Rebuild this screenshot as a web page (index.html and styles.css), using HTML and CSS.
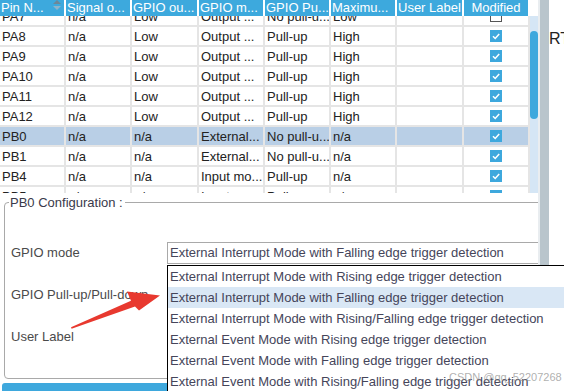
FILE: index.html
```html
<!DOCTYPE html>
<html lang="en">
<head>
    <meta charset="UTF-8">
    <title>Pin Configuration</title>
    <link rel="stylesheet" href="styles.css">
</head>
<body>
    <div class="window">
        <div class="left-pane">
            <div class="table-area">
                <div class="grid">
                    <div class="row head">
                        <div class="cell">Pin N...
                            <svg class="sort" width="8" height="12" viewBox="0 0 8 12"><polygon points="0,5 4,1 8,5" fill="#6d8797"/><polygon points="0,7 8,7 4,11" fill="#8fb4c9"/></svg>
                        </div>
                        <div class="cell">Signal o...</div>
                        <div class="cell">GPIO ou...</div>
                        <div class="cell">GPIO m...</div>
                        <div class="cell">GPIO Pu...</div>
                        <div class="cell">Maximu...</div>
                        <div class="cell">User Label</div>
                        <div class="cell center">Modified</div>
                    </div>
                    <div class="body">
                        <div class="rows" id="rows"></div>
                    </div>
                </div>
                <div class="vscroll"><div class="thumb"></div></div>
            </div>

            <div class="config">
                <fieldset class="box">
                    <legend>PB0 Configuration :</legend>
                    <div class="form">
                        <div class="label">GPIO mode</div>
                        <div class="select">External Interrupt Mode with Falling edge trigger detection</div>
                        <div class="label">GPIO Pull-up/Pull-down</div>
                        <div class="select">No pull-up and no pull-down</div>
                        <div class="label">User Label</div>
                        <div class="select"></div>
                    </div>
                </fieldset>
                <div class="hbar"></div>
            </div>
        </div>
        <div class="edge"></div>
        <div class="right-pane"><span>RT1</span></div>
    </div>

    <!-- open list of the GPIO mode combo -->
    <div class="dropdown">
        <div class="item">External Interrupt Mode with Rising edge trigger detection</div>
        <div class="item active">External Interrupt Mode with Falling edge trigger detection</div>
        <div class="item">External Interrupt Mode with Rising/Falling edge trigger detection</div>
        <div class="item">External Event Mode with Rising edge trigger detection</div>
        <div class="item">External Event Mode with Falling edge trigger detection</div>
        <div class="item">External Event Mode with Rising/Falling edge trigger detection</div>
    </div>

    <svg class="arrow" width="564" height="391" viewBox="0 0 564 391">
        <polygon points="71,327.3 131,300.8 127,291.5 160,295.5 139,310.5 135,306.5 71.6,328.7" fill="#e8392f"/>
    </svg>

    <div class="watermark">CSDN @qq_52207268</div>

    <script>
        // rows of the pin table (first one is scrolled half out of view)
        const pins = [
            ['PA7', 'n/a', 'Low', 'Output ...', 'No pull-u...', 'Low', '', false],
            ['PA8', 'n/a', 'Low', 'Output ...', 'Pull-up', 'High', '', true],
            ['PA9', 'n/a', 'Low', 'Output ...', 'Pull-up', 'High', '', true],
            ['PA10', 'n/a', 'Low', 'Output ...', 'Pull-up', 'High', '', true],
            ['PA11', 'n/a', 'Low', 'Output ...', 'Pull-up', 'High', '', true],
            ['PA12', 'n/a', 'Low', 'Output ...', 'Pull-up', 'High', '', true],
            ['PB0', 'n/a', 'n/a', 'External...', 'No pull-u...', 'n/a', '', true],
            ['PB1', 'n/a', 'n/a', 'External...', 'No pull-u...', 'n/a', '', true],
            ['PB4', 'n/a', 'n/a', 'Input mo...', 'Pull-up', 'n/a', '', true],
            ['PB5', 'n/a', 'n/a', 'Input mo...', 'Pull-up', 'n/a', '', true]
        ];

        const checked = '<svg width="12" height="12" viewBox="0 0 12 12"><rect width="12" height="12" fill="#3ea8dd"/><polyline points="3,6.3 5.2,8.5 9.2,4" fill="none" stroke="#fff" stroke-width="1.5"/></svg>';
        const unchecked = '<svg width="12" height="12" viewBox="0 0 12 12"><rect x="0.5" y="0.5" width="11" height="11" fill="#fff" stroke="#555"/></svg>';

        const rowsEl = document.getElementById('rows');
        pins.forEach(pin => {
            const row = document.createElement('div');
            row.className = 'row';
            if (pin[0] === 'PB0') row.classList.add('selected');
            for (let i = 0; i < 7; i++) {
                const cell = document.createElement('div');
                cell.className = 'cell';
                cell.textContent = pin[i];
                row.appendChild(cell);
            }
            const mod = document.createElement('div');
            mod.className = 'cell center';
            mod.innerHTML = pin[7] ? checked : unchecked;
            row.appendChild(mod);
            rowsEl.appendChild(row);
        });
    </script>
</body>
</html>
```

FILE: styles.css
```css
body {
    margin: 0;
    font-family: "Liberation Sans", Arial, sans-serif;
    font-size: 13px;
    color: #222;
    background: #fff;
    overflow: hidden;
}

.window {
    display: flex;
    width: 564px;
    height: 391px;
}

.left-pane {
    width: 538px;
    display: flex;
    flex-direction: column;
    overflow: hidden;
}

/* pin table */
.table-area {
    display: flex;
    height: 193px;
}

.grid {
    width: 530px;
    overflow: hidden;
}

.row {
    display: grid;
    grid-template-columns: 66px 66px 67px 66px 66px 66px 67px 66px;
    height: 20px;
}

.row .cell {
    box-sizing: border-box;
    border-right: 2px solid #e5e5e5;
    border-bottom: 2px solid #e5e5e5;
    padding-left: 2px;
    line-height: 19px;
    white-space: nowrap;
    overflow: hidden;
}

.row .center {
    display: flex;
    justify-content: center;
    align-items: center;
    padding: 0 0 1px;
}

.head {
    height: 16px;
}

.head .cell {
    position: relative;
    background: #3da9dd;
    color: #fff;
    border-right: 2px solid #fff;
    border-bottom: none;
    line-height: 16px;
    font-size: 13px;
    padding-left: 1px;
}

.head .center {
    display: block;
    text-align: center;
    padding: 0;
}

.sort {
    position: absolute;
    left: 53px;
    top: -1px;
}

.body {
    height: 177px;
    overflow: hidden;
}

.rows {
    margin-top: -9px;
}

.selected {
    background: #b9cfe6;
}

.vscroll {
    width: 8px;
    margin-top: 16px;
    background: #d5e6f5;
    position: relative;
}

.thumb {
    position: absolute;
    left: 0;
    top: 15px;
    width: 8px;
    height: 88px;
    border-radius: 4px;
    background: #3ea8dd;
}

/* configuration group */
.config {
    flex: 1;
    display: flex;
    flex-direction: column;
}

.box {
    margin: 2px 0 0 4px;
    width: 540px;
    height: 184px;
    box-sizing: border-box;
    border: 1px solid #a9a9a9;
    border-radius: 4px;
    padding: 0 0 0 6px;
}

.box legend {
    margin-left: -2px;
    padding: 0 2px 0 1px;
    color: #3a3a4a;
    line-height: 15px;
}

.form {
    display: grid;
    grid-template-columns: 156px 372px;
    grid-auto-rows: 22px;
    row-gap: 20px;
    margin-top: 32px;
    color: #4a4a4a;
}

.label {
    line-height: 22px;
}

.select {
    box-sizing: border-box;
    border: 1px solid #a9a9a9;
    border-right: none;
    padding-left: 2px;
    line-height: 20px;
    color: #45455a;
    white-space: nowrap;
    overflow: hidden;
}

.hbar {
    margin: 4px 0 0 2px;
    height: 9px;
    border-radius: 3px 0 0 0;
    background: #3ea8dd;
}

.edge {
    width: 2px;
    background: #e9edf0;
    border-right: 9px solid #b9c5cc;
}

.right-pane {
    flex: 1;
    overflow: hidden;
    padding-top: 30px;
    font-size: 16px;
    color: #222;
}

/* combo list, drawn over the page */
.dropdown {
    position: absolute;
    left: 167px;
    top: 265px;
    width: 420px;
    height: 140px;
    border-top: 1px solid #000;
    border-left: 1px solid #000;
    background: #fff;
    color: #45455a;
}

.item {
    height: 21px;
    line-height: 21px;
    padding-left: 2px;
    white-space: nowrap;
}

.item.active {
    background: #d9e7f5;
}

.arrow {
    position: absolute;
    left: 0;
    top: 0;
    pointer-events: none;
}

.watermark {
    position: absolute;
    left: 449px;
    top: 371px;
    font-size: 11px;
    color: rgba(140, 140, 140, 0.7);
}
```
